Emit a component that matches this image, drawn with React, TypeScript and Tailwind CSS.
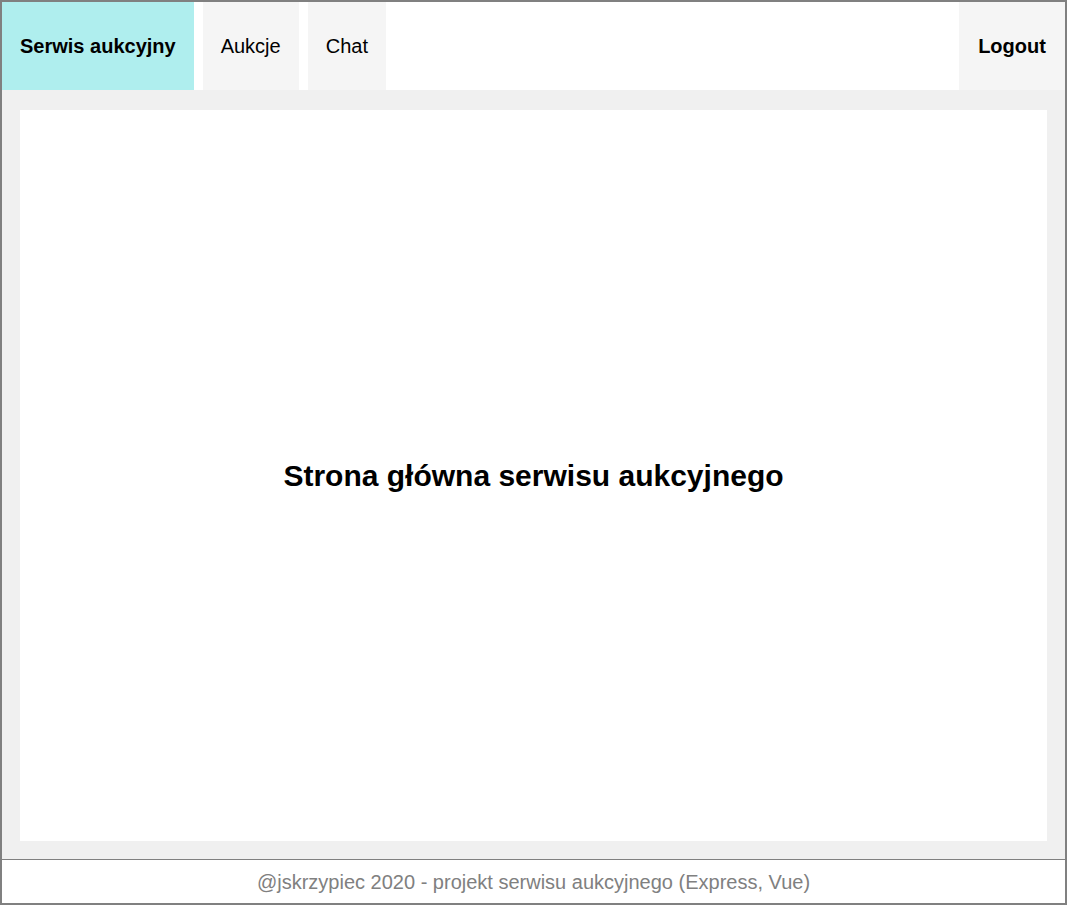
// Auction site home page: top nav, centered heading card, footer.
const navTab = "flex items-center px-[18px] text-[20px] text-black";

export default function App() {
  return (
    <div
      className="flex h-[905px] w-[1067px] flex-col border-2 border-[#808080] bg-white"
      style={{ fontFamily: '"Liberation Sans", Arial, sans-serif' }}
    >
      <nav className="flex h-[88px] shrink-0 gap-[9px] bg-white">
        <a className={`${navTab} bg-[#afeeee] font-bold`}>Serwis aukcyjny</a>
        <a className={`${navTab} bg-[#f5f5f5]`}>Aukcje</a>
        <a className={`${navTab} bg-[#f5f5f5]`}>Chat</a>
        <a className={`${navTab} ml-auto w-[106px] justify-center bg-[#f5f5f5] font-bold`}>Logout</a>
      </nav>

      <main className="flex flex-1 bg-[#f0f0f0] px-[18px] pb-[18px] pt-[20px]">
        <div className="flex flex-1 items-center justify-center bg-white">
          <h1 className="text-[30px] font-bold text-black">Strona główna serwisu aukcyjnego</h1>
        </div>
      </main>

      <footer className="flex h-[44px] shrink-0 items-center justify-center border-t border-[#808080] text-[20px] text-[#808080]">
        @jskrzypiec 2020 - projekt serwisu aukcyjnego (Express, Vue)
      </footer>
    </div>
  );
}
